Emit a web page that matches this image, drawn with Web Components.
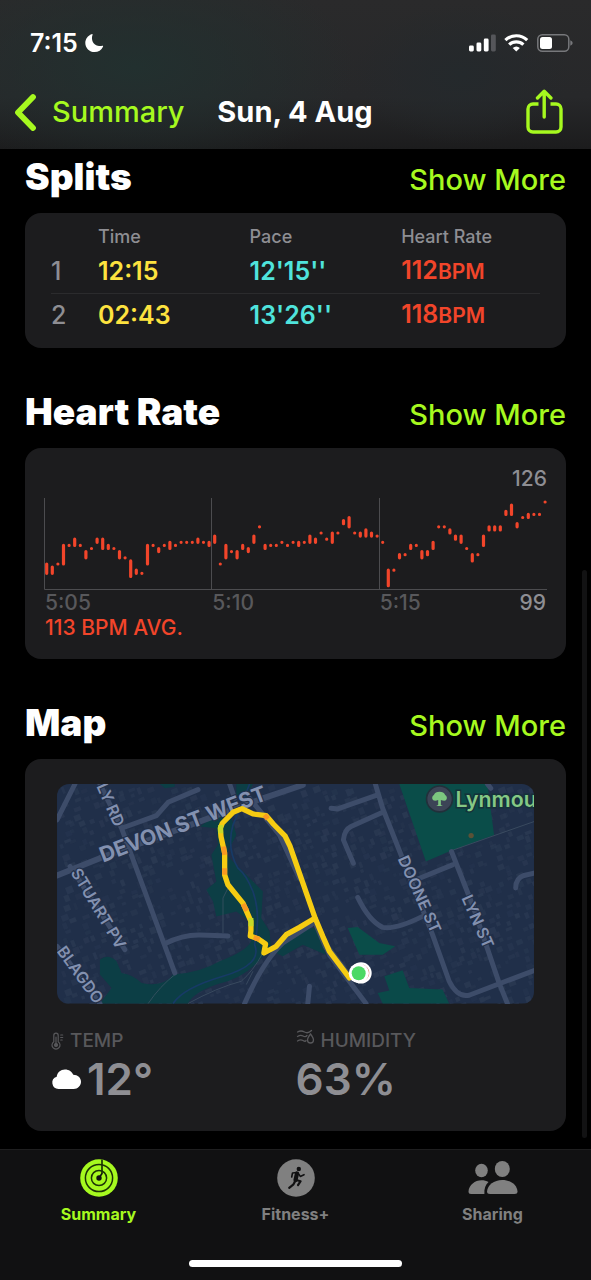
<!DOCTYPE html>
<html lang="en">
<head>
<meta charset="utf-8">
<meta name="viewport" content="width=device-width, initial-scale=1">
<title>Workout – Sun, 4 Aug</title>
<style>
  :root {
    --accent: #a6f91f;
    --card: #1c1c1e;
    --muted: #8e8e93;
    --dim: #58585b;
    --red: #f2452a;
    --yellow: #fde23f;
    --cyan: #4fe3dc;
  }
  html { background: #000; }
  body {
    margin: 0;
    min-height: 100vh;
    color: #fff;
    font-family: Inter, "Liberation Sans", sans-serif;
  }
</style>
</head>
<body>
<fitness-app></fitness-app>

<script>
const define = (name, html, setup) => {
  const template = document.createElement('template');
  template.innerHTML = html;
  customElements.define(name, class extends HTMLElement {
    constructor() {
      super();
      this.attachShadow({ mode: 'open' }).append(template.content.cloneNode(true));
    }
    connectedCallback() {
      if (setup && !this.ready) { this.ready = true; setup(this, this.shadowRoot); }
    }
  });
};

define('status-bar', `
  <style>
    :host { display: flex; align-items: center; height: 64px; padding: 11px 18px 0 30px; }
    time { font-size: 25px; font-weight: 600; line-height: 28px; }
    svg { display: block; }
    .moon { margin-left: 6px; }
    .signals { margin-left: auto; }
  </style>
  <time>7:15</time>
  <svg class="moon" width="20" height="20" viewBox="0 0 20 20" aria-label="Focus on" role="img">
    <path fill="#fff" d="M7.6 1.2C8.300.8 8.800 1.300 8.500 2 7 6 8.500 12.200 15 13 16.200 13.200 17.300 13 18.200 12.700 18.900 12.500 19.300 13 19 13.700 17.500 17 14.300 19 10.600 19 5.400 19 1.300 15 1.300 9.900 1.300 6 3.800 2.600 7.600 1.200Z"/>
  </svg>
  <svg class="signals" width="105" height="20" viewBox="0 0 105 20" aria-label="Signal, Wi-Fi and battery" role="img">
    <g fill="#fff">
      <rect x="1" y="12.500" width="4.800" height="6" rx="1.400"/>
      <rect x="8.500" y="9.500" width="4.800" height="9" rx="1.400"/>
      <rect x="15.800" y="5.500" width="4.800" height="13" rx="1.400"/>
      <rect x="23" y="1.500" width="4.800" height="17" rx="1.400" fill="#55565a"/>
      <path d="M48.300 18.600 44.700 15a5.400 5.400 0 0 1 7.200 0Z"/>
    </g>
    <g fill="none" stroke="#fff" stroke-width="3.200">
      <path d="M37.400 7.200a15.600 15.600 0 0 1 21.800 0"/>
      <path d="M41.200 11.700a10.200 10.200 0 0 1 14.200 0"/>
    </g>
    <rect x="69.800" y="1.700" width="31" height="16.600" rx="4.500" fill="none" stroke="#77787b" stroke-width="1.500"/>
    <rect x="72" y="4" width="12" height="12" rx="2.500" fill="#fff"/>
    <path d="M102.300 7.200q2.400 1 2.400 2.800t-2.400 2.800Z" fill="#77787b"/>
  </svg>`);

define('nav-bar', `
  <style>
    :host { display: grid; grid-template-columns: 1fr auto 1fr; align-items: center; height: 74px; padding: 0 26px 0 13px; }
    a { display: flex; align-items: center; gap: 14px; color: var(--accent); text-decoration: none; font-size: 29px; font-weight: 500; line-height: 34px; }
    h1 { margin: 0; padding-left: 12px; font-size: 29px; font-weight: 700; line-height: 34px; }
    button { justify-self: end; padding: 0; border: 0; background: none; color: var(--accent); }
    svg { display: block; }
  </style>
  <a href="#summary">
    <svg width="25" height="38" viewBox="0 0 25 38" aria-hidden="true"><path d="M20 4 5 19.500 20 35" fill="none" stroke="currentColor" stroke-width="5.800" stroke-linecap="round" stroke-linejoin="round"/></svg>
    <span>Summary</span>
  </a>
  <h1><slot></slot></h1>
  <button type="button" aria-label="Share">
    <svg width="42" height="46" viewBox="0 0 42 46" fill="none" stroke="currentColor" stroke-width="3.400" stroke-linecap="round" stroke-linejoin="round">
      <path d="M15.500 15H10a5 5 0 0 0-5 5v18a5 5 0 0 0 5 5h23a5 5 0 0 0 5-5V20a5 5 0 0 0-5-5h-5.500" stroke-linecap="butt"/>
      <path d="M21.200 28V2.500M14.500 9 21.200 2.300l6.700 6.700"/>
    </svg>
  </button>`);

define('detail-section', `
  <style>
    :host { display: block; }
    header { display: flex; align-items: center; justify-content: space-between; height: 42px; margin-bottom: 14px; }
    h2 { margin: 0; padding-bottom: 2px; font-size: 37px; font-weight: 900; line-height: 42px; }
    a { padding-top: 4px; color: var(--accent); text-decoration: none; font-size: 29px; font-weight: 500; line-height: 38px; }
    .card { border-radius: 16px; background: var(--card); }
  </style>
  <header><h2></h2><a href="#more">Show More</a></header>
  <div class="card"><slot></slot></div>`,
  (host, root) => { root.querySelector('h2').textContent = host.getAttribute('heading'); });

define('splits-table', `
  <style>
    :host { display: block; padding: 12px 26px 11px; }
    table { width: 100%; border-collapse: collapse; table-layout: fixed; text-align: left; }
    th, td { padding: 0; }
    thead th { height: 24px; color: var(--muted); font-size: 18px; font-weight: 500; line-height: 22px; }
    tbody tr { height: 44px; font-size: 25px; line-height: 30px; }
    tbody tr + tr { border-top: 1px solid #2b2b2d; }
    tbody th { color: var(--muted); font-weight: 500; }
    td { font-weight: 600; }
    .index { width: 47px; }
    .col { width: 31%; }
    .time { color: var(--yellow); }
    .pace { color: var(--cyan); }
    .rate { color: var(--red); }
    small { font-size: 21px; }
  </style>
  <table>
    <colgroup><col class="index"><col class="col"><col class="col"><col></colgroup>
    <thead><tr><th></th><th scope="col">Time</th><th scope="col">Pace</th><th scope="col">Heart Rate</th></tr></thead>
    <tbody>
      <tr><th scope="row">1</th><td class="time">12:15</td><td class="pace">12'15''</td><td class="rate">112<small>BPM</small></td></tr>
      <tr><th scope="row">2</th><td class="time">02:43</td><td class="pace">13'26''</td><td class="rate">118<small>BPM</small></td></tr>
    </tbody>
  </table>`);

define('heart-rate-chart', `
  <style>
    :host { display: block; padding: 19px; font-size: 21px; font-weight: 500; }
    p { margin: 0; }
    .max { color: var(--muted); line-height: 24px; text-align: right; }
    svg { display: block; width: 100%; margin-top: 7px; }
    .axis { display: grid; grid-template-columns: repeat(3, 1fr); padding-left: 1px; color: var(--dim); line-height: 26px; }
    .last { display: flex; justify-content: space-between; }
    .min { padding-right: 1px; color: var(--muted); }
    .avg { padding-left: 1px; color: var(--red); line-height: 24px; }
  </style>
  <p class="max">126</p>
  <svg viewBox="0 0 503 92" role="img" aria-label="Heart rate over time">
    <path d="M.5 0V91.500H503M167.500 0V91M335.500 0V91" fill="none" stroke="#4c4c4f"/>
    <path id="bars" fill="none" stroke="#f2452a" stroke-width="3.200" stroke-linecap="round"/>
  </svg>
  <div class="axis"><span>5:05</span><span>5:10</span><span class="last">5:15<span class="min">99</span></span></div>
  <p class="avg">113 BPM AVG.</p>`,
  (host, root) => {
    // One reading every ten seconds: "high-low" or a single value.
    const readings = `106-103 105-103 106 112-106 112 114-112 112 110-108 111 114-113 114-111 112-111 111 110-108 108
      107-102 104-103 103 112-106 112 111-110 112 113-111 112 113 113 113 114-113 113 113-112
      115-113 106 112-108 110 110-108 112-111 111-110 115-113 118 112-111 112 112 113 112 113
      113-112 113 115-113 114-113 116 114 116-113 116 120-119 121-118 116 116-115 117-115 116-115 115
      113 104-99 104 109-108 109 112-111 112 110-108 110-109 113-111 118 118 117-116 115-114 115-113
      111 109-107 109 115-112 118-117 118-117 118-117 123-122 125-122 119-118 121 122-121 122 122 126`.split(/\s+/);
    const y = bpm => (4 + (126 - bpm) * 3.1).toFixed(2);
    root.getElementById('bars').setAttribute('d', readings.map((r, i) => {
      const [high, low = high] = r.split('-').map(Number);
      return `M${(2.7 + i * 5.6).toFixed(2)} ${y(high)}V${y(low)}`;
    }).join(''));
  });

define('route-map', `
  <style>
    :host { display: block; overflow: hidden; border-radius: 12px; }
    svg { display: block; width: 100%; }
    text { font-family: Inter, "Liberation Sans", sans-serif; }
    .road { fill: none; stroke: #3d4c69; stroke-linecap: round; stroke-linejoin: round; stroke-width: 15; }
    .label { fill: #8391b0; stroke: #22304a; stroke-width: 7; paint-order: stroke; font-size: 48px; font-weight: 600; }
    .main-street { font-size: 64px; font-weight: 700; }
    .place { fill: #85c985; stroke: #15323a; stroke-width: 9; paint-order: stroke; font-size: 64px; font-weight: 600; }
    .park { fill: #0c3e45; }
  </style>
  <svg viewBox="21 27 1434 660" role="img" aria-label="Route map">
    <rect x="21" y="27" width="1434" height="660" fill="#202f49"/>
    <g id="blocks" fill="#2c3b54"></g>
    <g class="park">
      <path d="M150 555Q175 535 200 560L215 595Q250 600 275 625Q340 640 370 600Q450 595 510 560Q590 530 605 500L600 440L560 410L500 425L490 380L470 345L500 320L485 240L505 210L500 160L450 155L480 135L540 110L560 180L530 240L570 280L640 350L635 430L660 470L665 530L640 545Q590 610 500 630Q430 655 415 687H150L185 640L150 600Z"/>
      <path d="M330 27H375V35L345 40ZM560 27H610L590 70L560 60ZM690 500L750 460L800 460L830 540L760 510L700 545L670 530Z"/>
      <path fill="#0a4d49" d="M1050 27H1315L1335 180L1205 228L1130 260ZM895 460L925 457L990 505L1038 515L1000 540L930 540Z"/>
      <path fill="#0a4a49" d="M1005 605L1060 587L1080 640L1180 645L1200 687H1000L985 655L1020 648Z"/>
    </g>
    <g fill="none" stroke="#173a66" stroke-width="5">
      <path d="M370 687Q400 640 520 605T615 510Q635 420 610 350Q590 300 565 280Q530 220 550 150Q580 80 600 27"/>
    </g>
    <g fill="none" stroke="#46586a" stroke-width="2">
      <path d="M295 687Q330 635 378 598M520 475V370L535 340M415 687Q500 640 575 620Q610 590 640 535M590 630L610 590M1205 228L1455 140"/>
    </g>
    <g class="road">
      <path stroke-width="18" d="M21 302L150 250L640 70L760 30"/>
      <path d="M75 27L21 135M150 27L215 160L375 595M215 160L320 122L355 82L445 44M345 507Q400 480 450 481T535 484M540 27L555 70M600 70L690 180L750 310"/>
      <path d="M585 687Q640 560 700 505L800 440M60 275L225 525M21 515L150 687"/>
      <path d="M978 27L1000 100L1150 480L1200 620Q1225 670 1260 662L1455 588M845 100L865 102L985 60M912 265L882 195Q885 165 905 155L1000 112M1207 230L1270 390L1350 625L1375 687M1100 315L1210 270M925 368Q960 440 1000 458Q1040 465 1120 425M1400 340Q1400 310 1425 302L1455 295M800 440L840 540L950 687M780 635L775 687M1315 27L1325 40"/>
    </g>
    <g class="label">
      <text class="main-street" transform="translate(159 264) rotate(-21)">DEVON ST WEST</text>
      <text transform="translate(139 34) rotate(66)">LY RD</text>
      <text transform="translate(61 293) rotate(59)">STUART PV</text>
      <text transform="translate(19 530) rotate(54)">BLAGDO</text>
      <text transform="translate(1045 252) rotate(66)">DOONE ST</text>
      <text transform="translate(1236 370) rotate(66)">LYN ST</text>
    </g>
    <path d="M800 445L830 515L905 615" stroke="#3f4d61" stroke-width="20" fill="none"/>
    <path fill="none" stroke="#f6cc12" stroke-width="16" stroke-linejoin="round" stroke-linecap="round"
      d="M900 610L840 530L820 485L797 430L722 215L707 184L672 148L650 122L610 117L577 101L550 112L518 145L512 160L514 185L525 235V300L535 330L580 385L604 440V468L602 484L625 492L648 508L643 535L680 515L710 480L750 458L797 430"/>
    <g fill="none" stroke-width="15">
      <path stroke="#f99a22" d="M522 215L525 240M525 280V300M580 388L592 408M612 488L630 494M645 120L655 132"/>
      <path stroke="#c4d928" d="M513 150V175M604 430V455"/>
    </g>
    <circle cx="935" cy="595" r="32" fill="#fff"/>
    <circle cx="934" cy="595" r="25" fill="#fff" stroke="#e47a70" stroke-width="2"/>
    <circle cx="928" cy="596" r="30" fill="#fff"/>
    <circle cx="928" cy="596" r="21" fill="#4cd964"/>
    <circle cx="1171" cy="72" r="39" fill="#3c4456" stroke="#22303b" stroke-width="5"/>
    <path fill="#7cc67f" d="M1152 76a10 10 0 0 1 2-16a18 14 0 0 1 34 0a10 10 0 0 1 2 16q-4 3-15-1V90l6 3h-20l6-3V75q-9 4-15 1Z"/>
    <text class="place" x="1219" y="96">Lynmou</text>
    <circle cx="1266" cy="182" r="8" fill="#5b5136"/>
  </svg>`,
  (host, root) => {
    // Faint building footprints scattered over the blocks.
    let seed = 7;
    const rand = () => (seed = (seed * 16807) % 2147483647) / 2147483647;
    let out = '';
    for (let y = 34; y < 690; y += 25) {
      for (let x = 26; x < 1455; x += 29) {
        const w = 9 + rand() * 13, h = 9 + rand() * 13;
        const px = (x + rand() * 20).toFixed(1), py = (y + rand() * 18).toFixed(1);
        if (rand() < .25) continue;
        out += `<rect x="${px}" y="${py}" width="${w.toFixed(1)}" height="${h.toFixed(1)}" opacity="${(.25 + rand() * .5).toFixed(2)}" transform="rotate(-22 ${px} ${py})"/>`;
      }
    }
    root.getElementById('blocks').innerHTML = out;
  });

define('weather-stat', `
  <style>
    :host { display: block; }
    .name { display: flex; align-items: center; gap: 6px; color: var(--dim); font-size: 19px; font-weight: 500; line-height: 26px; }
    .value { display: flex; align-items: center; gap: 5px; color: var(--muted); font-size: 44px; font-weight: 600; line-height: 50px; }
  </style>
  <div class="name"><slot name="icon"></slot><slot name="name"></slot></div>
  <div class="value"><slot></slot></div>`);

define('tab-item', `
  <style>
    :host { display: block; color: #808080; }
    :host([selected]) { color: var(--accent); }
    a { display: flex; flex-direction: column; align-items: center; gap: 6px; color: inherit; text-decoration: none; font-size: 16px; font-weight: 700; line-height: 20px; }
  </style>
  <a href="#tab"><slot name="icon"></slot><span><slot></slot></span></a>`);

define('tab-bar', `
  <style>
    :host { display: block; border-top: 1px solid #1f1f20; background: #111112; }
    nav { display: grid; grid-template-columns: repeat(3, 1fr); height: 98px; padding-top: 8px; box-sizing: border-box; }
    svg { display: block; }
    .home { width: 36%; height: 7px; margin: 12px auto 13px; border-radius: 4px; background: #fff; }
  </style>
  <nav>
    <tab-item selected>
      <svg slot="icon" width="40" height="40" viewBox="-20 -20 40 40" aria-hidden="true">
        <circle r="18.800" fill="currentColor"/>
        <g fill="none" stroke="#1c3306" stroke-width="1.500"><circle r="13.600"/><circle r="7.600"/><path d="M3-18.500V-4" stroke-width="1.700"/></g>
        <circle r="2.700" fill="#111112"/><path d="M0 0 3-4.500" stroke="#111112" stroke-width="1.600"/>
      </svg>
      Summary
    </tab-item>
    <tab-item>
      <svg slot="icon" width="40" height="40" viewBox="-20 -20 40 40" aria-hidden="true">
        <circle r="18.800" fill="currentColor"/>
        <circle cx="2.800" cy="-9" r="2.200" fill="#111112"/>
        <g fill="none" stroke="#111112" stroke-linecap="round" stroke-linejoin="round">
          <path d="M1-4.500-.500 2" stroke-width="4.200"/>
          <path d="M1-5.500-3.500-5-4.300-1M2-5 4.300-1.600 8-3.300" stroke-width="1.600"/>
          <path d="M0 2 4.600 3.200 2 7.200M-.500 2.500-2.500 6.300-6.800 9.800" stroke-width="2.200"/>
        </g>
      </svg>
      Fitness+
    </tab-item>
    <tab-item>
      <svg slot="icon" width="50" height="40" viewBox="0 0 50 40" aria-hidden="true" fill="currentColor">
        <ellipse cx="13.500" cy="12.500" rx="6.300" ry="6.800"/><ellipse cx="34.300" cy="11" rx="7.500" ry="8"/>
        <path d="M3 36Q.500 36 .500 33.500C1 27 7 22.300 13.500 22.300c2.600 0 5 .600 7 1.800C17.500 27 16 30.500 16.400 36Z"/>
        <path d="M22 36q-3 0-3-2.500C19.500 27 26 22 34.300 22S49 27 49.500 33.500q0 2.500-3 2.500Z"/>
      </svg>
      Sharing
    </tab-item>
  </nav>
  <div class="home"></div>`);

define('fitness-app', `
  <style>
    :host { display: flex; flex-direction: column; min-height: 100vh; position: relative; }
    header { background: radial-gradient(220px 110px at 23% 45%, #22302f, transparent), radial-gradient(110px 70px at 78% 50%, #24292c, transparent), linear-gradient(#2a2a2b, #27282a 65%, #1c1c1d); }
    main { display: flex; flex-direction: column; gap: 44px; padding: 8px 25px 18px; }
    .map-card { padding: 25px 26px; }
    route-map { margin: 0 6px; }
    .weather { display: grid; grid-template-columns: 1fr 1fr; margin-top: 24px; padding-bottom: 2px; }
    tab-bar { margin-top: auto; }
    svg { display: block; }
    .raised { align-self: flex-start; }
    .scroll { position: absolute; right: 4px; top: 570px; bottom: 142px; width: 5px; border-radius: 3px; background: #121213; }
  </style>
  <header>
    <status-bar></status-bar>
    <nav-bar>Sun, 4 Aug</nav-bar>
  </header>
  <main>
    <detail-section heading="Splits"><splits-table></splits-table></detail-section>
    <detail-section heading="Heart Rate"><heart-rate-chart></heart-rate-chart></detail-section>
    <detail-section heading="Map">
      <div class="map-card">
        <route-map></route-map>
        <div class="weather">
          <weather-stat>
            <svg slot="icon" width="13" height="18" viewBox="0 0 13 18" fill="none" stroke="#58585b" stroke-width="1.200" stroke-linecap="round" aria-hidden="true">
              <path d="M2.800 9.700V3.400a2.200 2.200 0 0 1 4.400 0v6.300a4 4 0 1 1-4.400 0Z"/><circle cx="5" cy="13" r="1.500" fill="#58585b"/><path d="M5 5v7M9.700 3h2M9.700 5.500h2M9.700 8h1.500"/>
            </svg>
            <span slot="name">TEMP</span>
            <svg width="31" height="22" viewBox="0 0 31 22" role="img" aria-label="Cloudy"><path fill="#fff" d="M7.500 21a6.300 6.300 0 0 1-1.800-12.300C6.300 4.500 9.500 1.500 14 1.500c4 0 7 2.200 8.300 5.300 4.500 0 7.700 3 7.700 7s-3.200 7.200-7.300 7.200Z"/></svg>
            12°
          </weather-stat>
          <weather-stat>
            <svg class="raised" slot="icon" width="19" height="18" viewBox="0 0 19 18" fill="none" stroke="#58585b" stroke-width="1.300" stroke-linecap="round" aria-hidden="true">
              <path d="M1.500 4q3.500-2 7 0t7-1.500M1.500 8.500q3 -2 5.500-.500t4-.500M1.500 13q3-2 5.500-.500t3 0"/><path d="M14.500 6q3 4 3 6a3 3 0 0 1-6 0q0-2 3-6Z"/>
            </svg>
            <span slot="name">HUMIDITY</span>
            63%
          </weather-stat>
        </div>
      </div>
    </detail-section>
  </main>
  <tab-bar></tab-bar>
  <div class="scroll"></div>`);
</script>
</body>
</html>
